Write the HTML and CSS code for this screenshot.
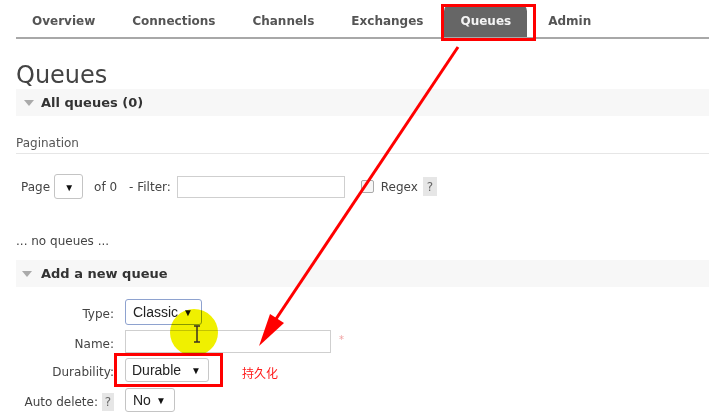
FILE: index.html
```html
<!DOCTYPE html>
<html>
<head>
<meta charset="utf-8">
<link rel="stylesheet" href="styles.css">
</head>
<body>
<nav class="tabs">
  <ul>
    <li>Overview</li>
    <li>Connections</li>
    <li>Channels</li>
    <li>Exchanges</li>
    <li class="active">Queues</li>
    <li>Admin</li>
  </ul>
</nav>
<main class="page">
  <h1>Queues</h1>
  <div class="section-head"><span class="tri"></span>All queues (0)</div>
  <div class="pag-title">Pagination</div>
  <div class="filter-row">
    <span class="lbl">Page</span>
    <span class="sel sel-page"><span class="arr">▼</span></span>
    <span class="lbl of">of 0</span>
    <span class="lbl filt">- Filter:</span>
    <span class="input input-filter"></span>
    <span class="check"></span>
    <span class="lbl regex">Regex</span>
    <span class="help">?</span>
  </div>
  <p class="empty">... no queues ...</p>
  <div class="section-head second"><span class="tri"></span>Add a new queue</div>
  <div class="form">
    <label class="flabel">Type:</label>
    <span class="sel sel-type"><span class="val">Classic</span><span class="arr">▼</span></span>
    <label class="flabel">Name:</label>
    <span class="name-cell"><span class="input input-name"></span><span class="req">*</span></span>
    <label class="flabel">Durability:</label>
    <span class="dur-cell"><span class="sel sel-dur"><span class="val">Durable</span><span class="arr">▼</span></span><span class="note">持久化</span></span>
    <label class="flabel">Auto delete: <span class="help small">?</span></label>
    <span class="sel sel-no"><span class="val">No</span><span class="arr">▼</span></span>
  </div>
</main>
<div class="mark mark-tab"></div>
<div class="mark mark-dur"></div>
<div class="spot"></div>
<svg class="cursor" width="10" height="18" viewBox="0 0 10 18"><path d="M2 1h6M5 1v16M2 17h6" stroke="#3a3020" stroke-width="1.5" fill="none"/></svg>
<svg class="arrow" width="709" height="412" viewBox="0 0 709 412">
  <line x1="458" y1="47" x2="274" y2="322" stroke="#ff0000" stroke-width="3"/>
  <polygon points="259,346 284,323 270,314" fill="#ff0000"/>
</svg>
</body>
</html>
```
FILE: styles.css
```css
html, body {
  margin: 0;
  padding: 0;
  background: #fff;
  width: 709px;
  height: 412px;
  overflow: hidden;
  font-family: "DejaVu Sans", Verdana, sans-serif;
  color: #444;
}
.tabs ul {
  list-style: none;
  margin: 0 0 0 16px;
  padding: 4px 0 0 0;
  display: flex;
  gap: 5px;
  border-bottom: 2px solid #a8a8a8;
  height: 33px;
}
.tabs li {
  padding: 0 16px;
  line-height: 34px;
  font-size: 12px;
  font-weight: bold;
  color: #555;
}
.tabs li.active {
  background: #666;
  color: #f4f4f4;
  border-radius: 7px 7px 0 0;
}
.page {
  padding-left: 16px;
}
h1 {
  margin: 22px 0 0 0;
  font-size: 24px;
  line-height: 28px;
  font-weight: normal;
  color: #444;
}
.section-head {
  background: #f7f7f7;
  height: 27px;
  display: flex;
  align-items: center;
  font-size: 13px;
  font-weight: bold;
  color: #333;
  padding-left: 8px;
}
.section-head .tri {
  width: 0;
  height: 0;
  border-left: 5px solid transparent;
  border-right: 5px solid transparent;
  border-top: 6px solid #aaa;
  margin-right: 7px;
}
.section-head.second {
  margin-top: 11px;
  padding-left: 6px;
}
.section-head.second .tri {
  margin-right: 9px;
}
.pag-title {
  margin-top: 19px;
  font-size: 12px;
  line-height: 16px;
  color: #555;
  padding-bottom: 2px;
  border-bottom: 1px solid #e6e6e6;
}
.filter-row {
  margin-top: 20px;
  display: flex;
  align-items: center;
  height: 25px;
  padding-left: 5px;
  font-size: 12px;
  color: #444;
}
.lbl { line-height: 16px; padding-top: 1px; }
.sel {
  display: inline-flex;
  align-items: center;
  box-sizing: border-box;
  border: 1px solid #c4c4c4;
  border-radius: 3px;
  background: #fff;
  position: relative;
  font-family: "Liberation Sans", Arial, sans-serif;
  font-size: 14px;
  color: #222;
}
.sel .arr {
  position: absolute;
  font-size: 10px;
  color: #111;
  top: 50%;
  transform: translateY(-50%);
}
.sel-page { width: 29px; height: 25px; margin-left: 4px; }
.sel-page .arr { right: 8px; }
.of { margin-left: 11px; }
.filt { margin-left: 12px; }
.input {
  display: inline-block;
  box-sizing: border-box;
  border: 1px solid #cfcfcf;
  background: #fff;
}
.input-filter { width: 168px; height: 22px; margin-left: 6px; }
.check {
  width: 11px;
  height: 11px;
  border: 1px solid #aaa;
  border-radius: 2px;
  margin-left: 16px;
  background: #f6f6f6;
}
.regex { margin-left: 7px; }
.help {
  display: inline-flex;
  align-items: center;
  justify-content: center;
  width: 14px;
  height: 19px;
  background: #e6e6e6;
  color: #666;
  font-size: 12px;
  margin-left: 5px;
}
.help.small { width: 12px; height: 18px; margin-left: 4px; }
.empty {
  margin: 34px 0 0 0;
  font-size: 12px;
  line-height: 16px;
  color: #444;
}
.form {
  margin-top: 12px;
  display: grid;
  grid-template-columns: 98px auto;
  column-gap: 11px;
  row-gap: 5px;
  align-items: center;
}
.flabel {
  justify-self: end;
  font-size: 12px;
  color: #444;
  padding-top: 4px;
  display: flex;
  align-items: center;
  white-space: nowrap;
}
.sel-type {
  width: 77px;
  height: 26px;
  border-color: #8ea2cf;
  padding-left: 7px;
}
.sel-type .arr { right: 8px; }
.name-cell, .dur-cell { display: flex; align-items: center; }
.input-name { width: 206px; height: 23px; }
.req {
  color: #f0a0a0;
  font-size: 10px;
  margin-left: 8px;
  margin-top: -4px;
}
.sel-dur {
  width: 84px;
  height: 24px;
  padding-left: 6px;
  border-color: #c8c8c8;
}
.sel-dur .arr { right: 7px; }
.note {
  margin-left: 33px;
  color: #ff1a1a;
  font-family: "Noto Sans CJK SC", sans-serif;
  font-size: 12px;
  padding-top: 4px;
}
.sel-no {
  width: 50px;
  height: 24px;
  padding-left: 7px;
  margin-top: 1px;
}
.sel-no .arr { right: 8px; }
.mark {
  position: absolute;
  box-sizing: border-box;
  border: 3px solid #ff0000;
}
.mark-tab { left: 441px; top: 4px; width: 95px; height: 37px; }
.mark-dur { left: 114px; top: 353px; width: 109px; height: 34px; }
.spot {
  position: absolute;
  left: 170px;
  top: 309px;
  width: 48px;
  height: 47px;
  border-radius: 50%;
  background: #f0f000;
  mix-blend-mode: multiply;
}
.cursor {
  position: absolute;
  left: 192px;
  top: 325px;
}
.arrow {
  position: absolute;
  left: 0;
  top: 0;
  pointer-events: none;
}
```
